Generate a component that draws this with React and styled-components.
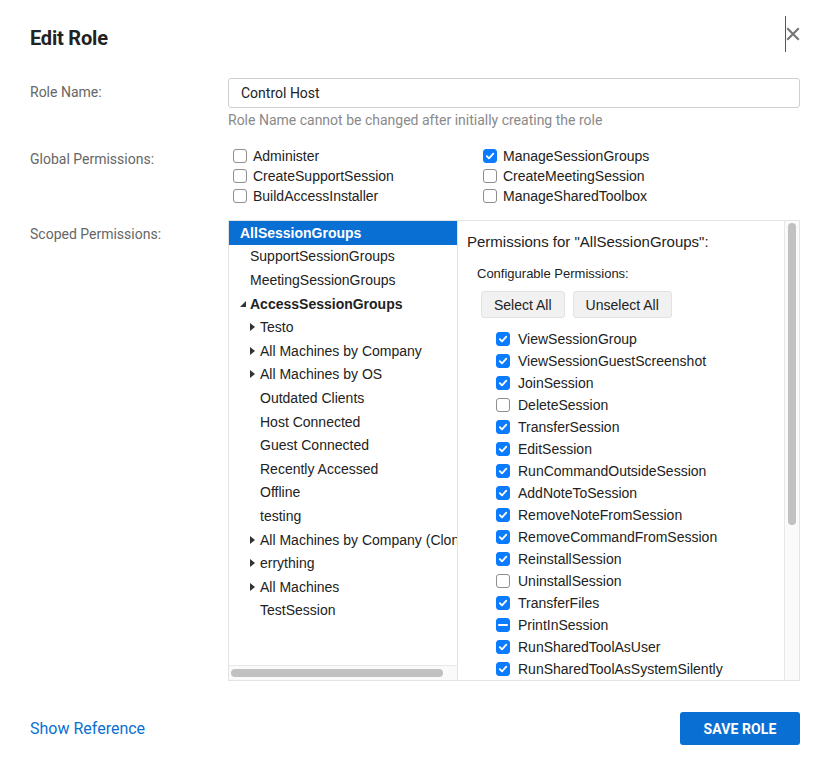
import React from "react";
import styled, { createGlobalStyle } from "styled-components";

const GlobalStyle = createGlobalStyle`
  html, body {
    margin: 0;
    padding: 0;
    background: #fff;
  }
  body {
    font-family: Roboto, "Liberation Sans", sans-serif;
    color: #222;
  }
`;

const globalPerms = [
  ["Administer", false],
  ["ManageSessionGroups", true],
  ["CreateSupportSession", false],
  ["CreateMeetingSession", false],
  ["BuildAccessInstaller", false],
  ["ManageSharedToolbox", false],
];

const tree = [
  { label: "AllSessionGroups", level: 0, selected: true },
  { label: "SupportSessionGroups", level: 1 },
  { label: "MeetingSessionGroups", level: 1 },
  { label: "AccessSessionGroups", level: 1, bold: true, arrow: "open" },
  { label: "Testo", level: 2, arrow: "closed" },
  { label: "All Machines by Company", level: 2, arrow: "closed" },
  { label: "All Machines by OS", level: 2, arrow: "closed" },
  { label: "Outdated Clients", level: 2 },
  { label: "Host Connected", level: 2 },
  { label: "Guest Connected", level: 2 },
  { label: "Recently Accessed", level: 2 },
  { label: "Offline", level: 2 },
  { label: "testing", level: 2 },
  { label: "All Machines by Company (Clone)", level: 2, arrow: "closed" },
  { label: "errything", level: 2, arrow: "closed" },
  { label: "All Machines", level: 2, arrow: "closed" },
  { label: "TestSession", level: 2 },
];

const scopedPerms = [
  ["ViewSessionGroup", "on"],
  ["ViewSessionGuestScreenshot", "on"],
  ["JoinSession", "on"],
  ["DeleteSession", "off"],
  ["TransferSession", "on"],
  ["EditSession", "on"],
  ["RunCommandOutsideSession", "on"],
  ["AddNoteToSession", "on"],
  ["RemoveNoteFromSession", "on"],
  ["RemoveCommandFromSession", "on"],
  ["ReinstallSession", "on"],
  ["UninstallSession", "off"],
  ["TransferFiles", "on"],
  ["PrintInSession", "mixed"],
  ["RunSharedToolAsUser", "on"],
  ["RunSharedToolAsSystemSilently", "on"],
];

const Check = ({ state }) => (
  <Box $state={state}>
    {state === "on" && (
      <svg width="10" height="10" viewBox="0 0 10 10">
        <path
          d="M1.8 5.2 L4 7.4 L8.3 2.6"
          fill="none"
          stroke="#fff"
          strokeWidth="1.8"
          strokeLinecap="round"
          strokeLinejoin="round"
        />
      </svg>
    )}
    {state === "mixed" && <Dash />}
  </Box>
);

const Arrow = ({ dir }) => (
  <ArrowSlot>
    {dir === "closed" && (
      <svg width="5" height="8" viewBox="0 0 5 8">
        <path d="M0 0 L5 4 L0 8 Z" fill="#333" />
      </svg>
    )}
    {dir === "open" && (
      <svg width="6" height="6" viewBox="0 0 6 6">
        <path d="M6 0 L6 6 L0 6 Z" fill="#333" />
      </svg>
    )}
  </ArrowSlot>
);

const App = () => {
  return (
    <>
      <GlobalStyle />
      <Dialog>
        <Header>
          <Title>Edit Role</Title>
          <CloseButton>
            <svg width="14" height="14" viewBox="0 0 14 14">
              <path
                d="M2 2 L12 12 M12 2 L2 12"
                stroke="#777"
                strokeWidth="2.2"
                strokeLinecap="square"
              />
            </svg>
          </CloseButton>
        </Header>

        <FormRow>
          <Label $top={6}>Role Name:</Label>
          <Field>
            <Input defaultValue="Control Host" />
            <Hint>Role Name cannot be changed after initially creating the role</Hint>
          </Field>
        </FormRow>

        <FormRow $gap={20}>
          <Label $top={3}>Global Permissions:</Label>
          <GlobalGrid>
            {globalPerms.map(([name, checked]) => (
              <CheckRow key={name}>
                <Check state={checked ? "on" : "off"} />
                {name}
              </CheckRow>
            ))}
          </GlobalGrid>
        </FormRow>

        <FormRow $gap={16}>
          <Label $top={6}>Scoped Permissions:</Label>
          <Scoped>
            <TreePane>
              <TreeView>
                <TreeList>
                  {tree.map((item) => (
                    <TreeItem
                      key={item.label}
                      $level={item.level}
                      $selected={item.selected}
                      $bold={item.bold}
                    >
                      {item.level > 0 && <Arrow dir={item.arrow} />}
                      {item.label}
                    </TreeItem>
                  ))}
                </TreeList>
              </TreeView>
              <HTrack>
                <HThumb />
              </HTrack>
            </TreePane>
            <PermPane>
              <PermContent>
                <PermTitle>Permissions for "AllSessionGroups":</PermTitle>
                <SubTitle>Configurable Permissions:</SubTitle>
                <ButtonRow>
                  <GrayButton>Select All</GrayButton>
                  <GrayButton>Unselect All</GrayButton>
                </ButtonRow>
                <PermList>
                  {scopedPerms.map(([name, state]) => (
                    <PermRow key={name}>
                      <Check state={state} />
                      {name}
                    </PermRow>
                  ))}
                </PermList>
              </PermContent>
              <VTrack>
                <VThumb />
              </VTrack>
            </PermPane>
          </Scoped>
        </FormRow>

        <Footer>
          <LinkText>Show Reference</LinkText>
          <SaveButton>SAVE ROLE</SaveButton>
        </Footer>
      </Dialog>
    </>
  );
};

const Dialog = styled.div`
  width: 828px;
  height: 774px;
  box-sizing: border-box;
  padding: 20px 28px 0 30px;
  display: flex;
  flex-direction: column;
`;

const Header = styled.div`
  display: flex;
  justify-content: space-between;
  align-items: center;
  height: 36px;
  margin-bottom: 22px;
`;

const Title = styled.h2`
  margin: 0;
  font-size: 20px;
  font-weight: 700;
  color: #222;
  letter-spacing: -0.2px;
`;

const CloseButton = styled.div`
  height: 36px;
  width: 14px;
  margin-top: -8px;
  border-left: 1px solid #555;
  display: flex;
  align-items: center;
  justify-content: center;
`;

const FormRow = styled.div`
  display: flex;
  margin-top: ${(p) => p.$gap || 0}px;
`;

const Label = styled.div`
  width: 198px;
  flex-shrink: 0;
  padding-top: ${(p) => p.$top}px;
  font-size: 14px;
  color: #666;
  font-weight: 400;
`;

const Field = styled.div`
  flex: 1;
  display: flex;
  flex-direction: column;
`;

const Input = styled.input`
  height: 30px;
  box-sizing: border-box;
  border: 1px solid #cfcfcf;
  border-radius: 3px;
  padding: 0 12px;
  font-family: Roboto, sans-serif;
  font-size: 14px;
  color: #222;
  outline: none;
`;

const Hint = styled.div`
  margin-top: 4px;
  font-size: 14px;
  color: #8a8a8a;
`;

const GlobalGrid = styled.div`
  display: grid;
  grid-template-columns: 250px 250px;
  row-gap: 4px;
  padding-left: 5px;
  font-family: "Liberation Sans", Arial, sans-serif;
  font-size: 14px;
  color: #222;
`;

const CheckRow = styled.div`
  display: flex;
  align-items: center;
  gap: 6px;
  height: 16px;
`;

const Box = styled.span`
  width: 14px;
  height: 14px;
  box-sizing: border-box;
  border-radius: 3px;
  flex-shrink: 0;
  display: inline-flex;
  align-items: center;
  justify-content: center;
  background: ${(p) => (p.$state === "off" ? "#fff" : "#0b7cff")};
  border: 1px solid ${(p) => (p.$state === "off" ? "#8e8e8e" : "#0b7cff")};
`;

const Dash = styled.span`
  width: 10px;
  height: 2px;
  background: #fff;
  border-radius: 1px;
`;

const Scoped = styled.div`
  display: flex;
  width: 572px;
  height: 461px;
  box-sizing: border-box;
  border-top: 1px solid #e3e3e3;
  border-bottom: 1px solid #e3e3e3;
  border-right: 1px solid #e3e3e3;
  font-family: "Liberation Sans", Arial, sans-serif;
  color: #222;
`;

const TreePane = styled.div`
  width: 230px;
  flex-shrink: 0;
  box-sizing: border-box;
  border-left: 1px solid #e3e3e3;
  border-right: 1px solid #e3e3e3;
  display: flex;
  flex-direction: column;
`;

const TreeView = styled.div`
  flex: 1;
  overflow: hidden;
`;

const TreeList = styled.div`
  display: inline-flex;
  flex-direction: column;
  min-width: 100%;
`;

const TreeItem = styled.div`
  display: flex;
  align-items: center;
  height: 23.6px;
  white-space: nowrap;
  font-size: 14px;
  padding-left: ${(p) => (p.$level === 0 ? 11 : 10 + (p.$level - 1) * 10)}px;
  padding-right: 4px;
  font-weight: ${(p) => (p.$bold || p.$selected ? 700 : 400)};
  background: ${(p) => (p.$selected ? "#0a6fd3" : "transparent")};
  color: ${(p) => (p.$selected ? "#fff" : "#222")};
`;

const ArrowSlot = styled.span`
  width: 10px;
  display: inline-flex;
  align-items: center;
  padding-left: 1px;
`;

const HTrack = styled.div`
  height: 15px;
  flex-shrink: 0;
  box-sizing: border-box;
  background: #fafafa;
  border-top: 1px solid #e8e8e8;
  padding: 3px 14px 3px 2px;
  display: flex;
`;

const HThumb = styled.div`
  flex: 1;
  background: #c1c1c1;
  border-radius: 4px;
`;

const PermPane = styled.div`
  flex: 1;
  display: flex;
  min-width: 0;
`;

const PermContent = styled.div`
  flex: 1;
  overflow: hidden;
  padding: 12px 0 0 9px;
`;

const VTrack = styled.div`
  width: 15px;
  flex-shrink: 0;
  box-sizing: border-box;
  background: #fafafa;
  border-left: 1px solid #e8e8e8;
  padding: 2px 3px;
`;

const VThumb = styled.div`
  height: 302px;
  background: #c1c1c1;
  border-radius: 4px;
`;

const PermTitle = styled.div`
  font-size: 15px;
  line-height: 18px;
`;

const SubTitle = styled.div`
  margin-top: 15px;
  padding-left: 10px;
  font-size: 13px;
  line-height: 16px;
`;

const ButtonRow = styled.div`
  display: flex;
  gap: 8px;
  margin-top: 9px;
  padding-left: 14px;
`;

const GrayButton = styled.button`
  height: 27px;
  padding: 0 12px;
  background: #f1f1f1;
  border: 1px solid #e2e2e2;
  border-radius: 3px;
  font-family: "Liberation Sans", Arial, sans-serif;
  font-size: 14px;
  color: #222;
`;

const PermList = styled.div`
  display: flex;
  flex-direction: column;
  margin-top: 10px;
  padding-left: 29px;
`;

const PermRow = styled.div`
  display: flex;
  align-items: center;
  gap: 8px;
  height: 22px;
  font-size: 14px;
  white-space: nowrap;
`;

const Footer = styled.div`
  display: flex;
  justify-content: space-between;
  align-items: center;
  margin-top: 31px;
`;

const LinkText = styled.a`
  font-size: 16px;
  color: #0a6fd3;
  cursor: pointer;
`;

const SaveButton = styled.button`
  width: 120px;
  height: 33px;
  background: #0a6fd3;
  color: #fff;
  border: none;
  border-radius: 3px;
  font-family: Roboto, sans-serif;
  font-size: 14px;
  font-weight: 700;
  letter-spacing: 0.1px;
`;

export default App;
